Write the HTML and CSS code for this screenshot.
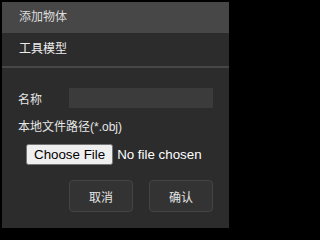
FILE: index.html
```html
<!DOCTYPE html>
<html>
<head>
<meta charset="utf-8">
<link rel="stylesheet" href="styles.css">
</head>
<body>
<div class="panel">
  <div class="title">添加物体</div>
  <div class="subtitle">工具模型</div>
  <div class="form">
    <div class="row">
      <span class="label">名称</span>
      <div class="input"></div>
    </div>
    <div class="path-label">本地文件路径(*.obj)</div>
    <div class="file-row"><input type="file" class="file"></div>
    <div class="actions">
      <button class="btn">取消</button>
      <button class="btn">确认</button>
    </div>
  </div>
</div>
</body>
</html>
```
FILE: styles.css
```css
html, body {
  margin: 0;
  padding: 0;
  background: #000;
}
body {
  padding: 2px 0 0 2px;
  width: 232px;
  height: 232px;
  box-sizing: border-box;
}
.panel {
  width: 227px;
  height: 226px;
  background: #2c2c2c;
  font-family: "Liberation Sans", "Noto Sans CJK SC", sans-serif;
  font-size: 12px;
  color: #e6e6e6;
}
.title {
  height: 31px;
  line-height: 31px;
  background: #474747;
  padding-left: 17px;
  color: #dcdcdc;
}
.subtitle {
  height: 33px;
  line-height: 33px;
  padding-left: 17px;
  border-bottom: 2px solid #474747;
  color: #eeeeee;
}
.form {
  padding: 20px 16px 0 16px;
}
.row {
  display: flex;
  align-items: center;
  height: 20px;
}
.label {
  width: 51px;
}
.input {
  width: 144px;
  height: 20px;
  background: #3b3b3b;
}
.path-label {
  margin-top: 10px;
  height: 18px;
  line-height: 18px;
}
.file-row {
  margin-top: 8px;
  padding-left: 8px;
  height: 20px;
  display: flex;
  align-items: center;
}
.file {
  color: #fff;
  font-family: "Liberation Sans", sans-serif;
  font-size: 13.33px;
}
.actions {
  margin-top: 16px;
  display: flex;
  justify-content: flex-end;
  gap: 16px;
}
.btn {
  width: 64px;
  height: 32px;
  background: #333333;
  border: 1px solid #444444;
  border-radius: 4px;
  color: #e6e6e6;
  font-family: "Liberation Sans", "Noto Sans CJK SC", sans-serif;
  font-size: 12px;
  padding: 0;
}
```
